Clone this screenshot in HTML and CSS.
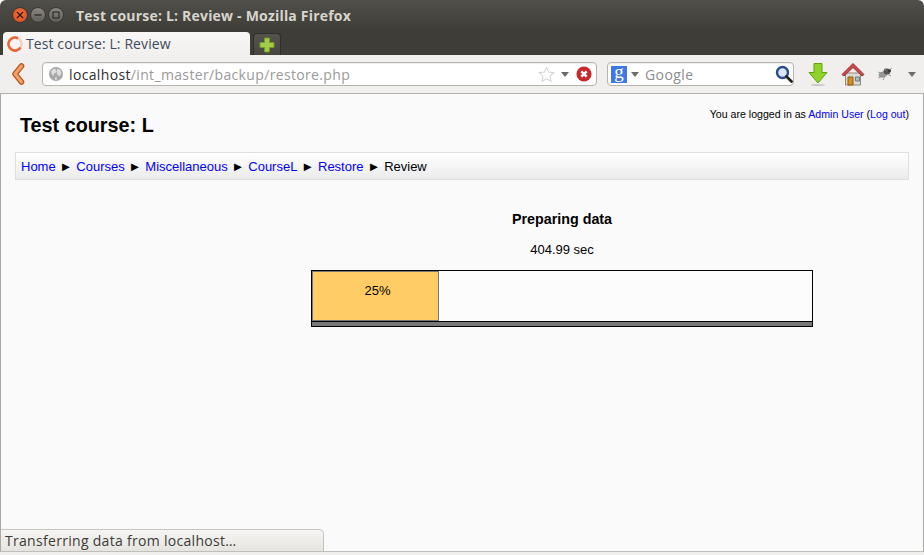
FILE: index.html
```html
<!DOCTYPE html>
<html lang="en">
<head>
<meta charset="utf-8">
<title>Test course: L: Review</title>
<link rel="stylesheet" href="styles.css">
</head>
<body>
<div class="window">
  <div class="titlebar">
    <div class="wm-buttons">
      <span class="wm wm-close"><svg width="8" height="8" viewBox="0 0 8 8"><path d="M1 1l6 6M7 1l-6 6" stroke="#3a1a0c" stroke-width="1.4"/></svg></span>
      <span class="wm"><svg width="8" height="8" viewBox="0 0 8 8"><path d="M0.5 4h7" stroke="#2e2d29" stroke-width="1.4"/></svg></span>
      <span class="wm"><svg width="8" height="8" viewBox="0 0 8 8"><rect x="1" y="1" width="6" height="6" fill="none" stroke="#2e2d29" stroke-width="1.2"/></svg></span>
    </div>
    <div class="title">Test course: L: Review - Mozilla Firefox</div>
  </div>
  <div class="tabbar">
    <div class="tab">
      <svg class="spinner" width="16" height="16" viewBox="0 0 16 16"><circle cx="8" cy="8" r="6.500" fill="none" stroke="#f5cfc0" stroke-width="2.400"/><path d="M13.500 11.500A6.500 6.500 0 1 1 11 2.300" fill="none" stroke="#e8683a" stroke-width="2.600"/></svg>
      <span>Test course: L: Review</span>
    </div>
    <div class="newtab"><svg width="16" height="16" viewBox="0 0 16 16"><path d="M5.500 1h5v4.500h4.500v5h-4.500v4.500h-5v-4.500h-4.500v-5h4.500z" fill="#a4cb4a" stroke="#6f9a24"/></svg></div>
  </div>
  <div class="navbar">
    <svg class="back" width="14" height="22" viewBox="0 0 14 22"><path d="M10.500 3L4 11l6.500 8" fill="none" stroke="#b8551f" stroke-width="5.600" stroke-linecap="round" stroke-linejoin="round"/><path d="M10.500 3L4 11l6.500 8" fill="none" stroke="#f2a268" stroke-width="3" stroke-linecap="round" stroke-linejoin="round"/></svg>
    <div class="field urlbar">
      <svg class="globe" width="16" height="16" viewBox="0 0 16 16"><circle cx="8" cy="8" r="7" fill="#a6a6a6"/><path d="M3 5l3-2.500 2.500 1.500L8 6.500 6 7.500 5.500 10 4 9zM9.500 2.500l3 1.500 1 3.500-2 3-2-1.500-1-3zM7 11l2 .5-.5 2.500-1.500-.5z" fill="#dedede"/></svg>
      <span class="url"><span class="host">localhost</span>/int_master/backup/restore.php</span>
      <svg class="star" width="17" height="17" viewBox="0 0 18 18"><path d="M9 1.500l2.300 5 5.400.6-4 3.700 1.100 5.400L9 13.500l-4.800 2.700 1.100-5.400-4-3.700 5.400-.6z" fill="#fff" stroke="#d4d4d4" stroke-width="1.100"/></svg>
      <span class="caret url-caret"></span>
      <svg class="stop" width="16" height="16" viewBox="0 0 18 18"><circle cx="9" cy="9" r="8.500" fill="#c9282d"/><path d="M6 6l6 6M12 6l-6 6" stroke="#fff" stroke-width="2.800"/></svg>
    </div>
    <div class="field searchbar">
      <span class="g-logo">g</span>
      <span class="caret"></span>
      <span class="search-text">Google</span>
      <svg class="magnifier" width="18" height="18" viewBox="0 0 18 18"><circle cx="7.500" cy="7.500" r="5.500" fill="#dbe6f5" stroke="#2b4b93" stroke-width="2.400"/><path d="M11.500 11.500l5 5" stroke="#222" stroke-width="2.800" stroke-linecap="round"/></svg>
    </div>
    <svg class="download" width="22" height="24" viewBox="0 0 22 24"><path d="M7 1.500h8v9h5L11 21 2 10.500h5z" fill="#8fd32a" stroke="#62a312"/><ellipse cx="11" cy="23" rx="7" ry="1" fill="#c9c8c4"/></svg>
    <svg class="home" width="24" height="24" viewBox="0 0 24 24"><path d="M4.500 11h15v12h-15z" fill="#dcdad5" stroke="#8c8a85"/><path d="M1 12.500L12 1.500l11 11-2 1.500-9-8.500-9 8.500z" fill="#cc4a4a" stroke="#983030"/><path d="M7 15h5v8H7z" fill="#d98c1f" stroke="#8d5a12"/><path d="M14.500 15h4v4h-4z" fill="#a9bccd" stroke="#777"/></svg>
    <svg class="bug" width="16" height="14" viewBox="0 0 16 14"><ellipse cx="6" cy="7.500" rx="4.500" ry="3" fill="#9a9a9a" transform="rotate(-20 6 7.500)"/><ellipse cx="10" cy="4.500" rx="3.500" ry="3" fill="#555"/><circle cx="12.500" cy="3.500" r="1.500" fill="#333"/><path d="M1 5l4 1.500M1 11l4-2M6 13l2-4M14 9l-4-2M15 1l-3 2M8 1l1 3" stroke="#8a8a8a" stroke-width=".8"/></svg>
    <span class="caret menu-caret"></span>
  </div>
  <div class="page">
    <header class="page-header">
      <h1>Test course: L</h1>
      <div class="login">You are logged in as <a href="#">Admin User</a> (<a href="#">Log out</a>)</div>
    </header>
    <nav class="breadcrumb">
      <a href="#">Home</a><span class="sep">►</span><a href="#">Courses</a><span class="sep">►</span><a href="#">Miscellaneous</a><span class="sep">►</span><a href="#">CourseL</a><span class="sep">►</span><a href="#">Restore</a><span class="sep">►</span><span>Review</span>
    </nav>
    <main class="main">
      <h2>Preparing data</h2>
      <p class="time">404.99 sec</p>
      <div class="progress">
        <div class="progress-track"><div class="progress-fill" style="width:127px">25%</div></div>
        <div class="progress-foot"></div>
      </div>
    </main>
    <div class="status">Transferring data from localhost…</div>
  </div>
  <div class="bottom"></div>
</div>
</body>
</html>
```
FILE: styles.css
```css
* { box-sizing: border-box; }
html, body { margin: 0; height: 100%; overflow: hidden; }
body { font-family: "Liberation Sans", Arial, sans-serif; }
.window { width: 924px; height: 555px; display: flex; flex-direction: column; background: #fafafa; }

.titlebar { height: 30px; flex: none; display: flex; align-items: center; padding: 0 0 0 12px; background: linear-gradient(#504f4a, #3f3d38); border-radius: 6px 6px 0 0; }
.wm-buttons { display: flex; gap: 2px; }
.wm { width: 16px; height: 16px; border-radius: 50%; background: linear-gradient(#8a8880, #5f5d57); display: flex; align-items: center; justify-content: center; border: 1px solid #3a3935; }
.wm-close { background: radial-gradient(circle at 50% 40%, #f0703c, #d84a1c); }
.title { margin-left: 12px; font: 700 14px "Open Sans", sans-serif; color: #d8d5cc; letter-spacing: .2px; white-space: nowrap; }

.tabbar { height: 25px; flex: none; display: flex; align-items: flex-end; gap: 3px; padding-left: 3px; background: #3f3d38; }
.tab { width: 247px; height: 23px; display: flex; align-items: center; gap: 3px; padding: 0 0 0 4px; background: linear-gradient(#f8f7f6, #f1f0ee); border-radius: 4px 4px 0 0; font: 14px "Open Sans", sans-serif; color: #3d4a5c; letter-spacing: .1px; }
.spinner { flex: none; }
.newtab { width: 28px; height: 22px; display: flex; align-items: center; justify-content: center; background: linear-gradient(#55534c, #47453f); border: 1px solid #2f2e2a; border-bottom: 0; border-radius: 4px 4px 0 0; }

.navbar { height: 39px; flex: none; display: flex; align-items: center; background: #f0efed; border-bottom: 1px solid #b3b1ac; padding: 0 0 0 11px; }
.back { flex: none; }
.field { height: 24px; background: #fff; border: 1px solid #b6b4ae; border-radius: 4px; display: flex; align-items: center; box-shadow: inset 0 1px 1px #eee; }
.urlbar { width: 555px; margin-left: 17px; padding: 0 4px 0 5px; }
.globe { flex: none; }
.url { margin-left: 5px; font: 14px "Open Sans", sans-serif; color: #9a9a9a; flex: 1; white-space: nowrap; letter-spacing: .35px; }
.host { color: #2f2f2f; }
.star { flex: none; }
.caret { width: 0; height: 0; border: 4px solid transparent; border-top: 5px solid #6c6c6c; border-bottom: 0; flex: none; margin: 0 5px; }
.url-caret { margin: 0 7px 0 6px; }
.stop { flex: none; }
.searchbar { width: 187px; margin-left: 10px; padding: 0 0 0 3px; }
.g-logo { width: 16px; height: 17px; background: #3f78e6; color: #fff; font: 400 19px/11px "Liberation Serif", serif; text-align: center; flex: none; }
.searchbar .caret { margin: 0 4px; }
.search-text { margin-left: 2px; flex: 1; font: 14px "Open Sans", sans-serif; color: #8d8d8d; letter-spacing: .4px; }
.magnifier { flex: none; }
.download { margin-left: 13px; flex: none; }
.home { margin-left: 12px; flex: none; }
.bug { margin-left: 12px; flex: none; }
.menu-caret { margin: 0 0 0 15px; }

.page { position: relative; flex: 1; display: flex; flex-direction: column; border: solid #aaa8a3; border-width: 0 1px; padding: 0 14px; color: #000; }
a { color: #00f; text-decoration: none; }
.page-header { display: flex; justify-content: space-between; height: 58px; }
h1 { margin: 20px 0 0 5px; font-size: 19.800px; line-height: 23px; font-weight: 700; }
.login { margin: 14px 0 0; font-size: 10.600px; line-height: 13px; }
.breadcrumb { height: 28px; display: flex; align-items: center; padding-left: 5px; background: linear-gradient(#fff, #ebebeb); border: 1px solid #dedede; font-size: 13px; }
.sep { width: 20.600px; text-align: center; font-size: 13px; flex: none; }
.main { margin-left: 200px; display: flex; flex-direction: column; align-items: center; }
h2 { margin: 31px 0 0; font-size: 14.300px; line-height: 17px; font-weight: 700; }
.time { margin: 14px 0 0; font-size: 13px; line-height: 15px; }
.progress { width: 502px; margin-top: 13px; border: 1px solid #000; background: #fcfcfc; }
.progress-track { height: 50px; }
.progress-fill { height: 50px; padding-left: 4px; border: 1px solid #777; background: #fc6; font-size: 13px; line-height: 38px; text-align: center; }
.progress-foot { height: 5px; background: #777; border-top: 1px solid #000; }
.status { position: absolute; left: 0; bottom: 0; width: 323px; height: 22px; padding-left: 4px; background: linear-gradient(#f6f5f3, #e6e4e0); border: 1px solid #c6c4bf; border-left: 0; border-bottom: 0; border-radius: 0 5px 0 0; font: 14px/22px "Open Sans", sans-serif; color: #3c3b37; white-space: nowrap; letter-spacing: .3px; }
.bottom { height: 4px; flex: none; background: #f0efed; border-top: 1px solid #c0beb9; }
```
